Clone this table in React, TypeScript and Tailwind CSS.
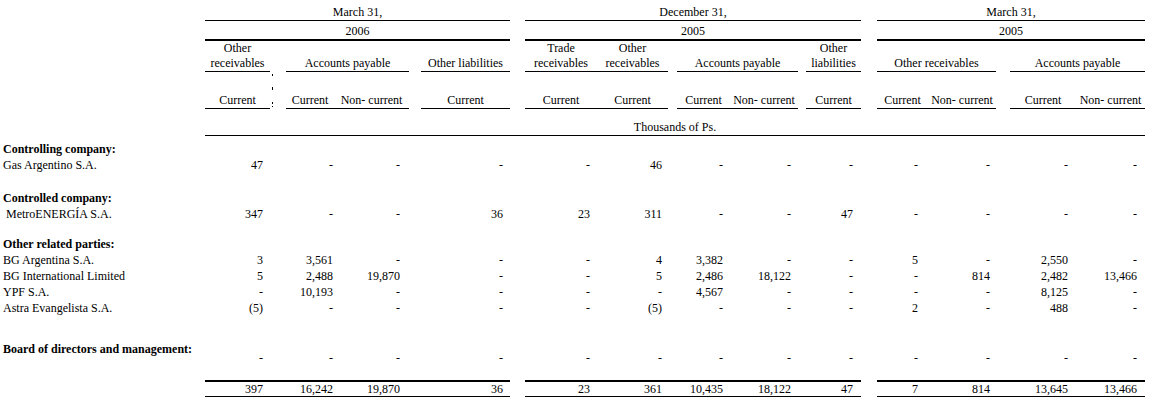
import React from "react";

// shared column tracks: label | 2006 block | gap | Dec 2005 block | gap | Mar 2005 block
const GRID =
  "grid grid-cols-[205px_65px_16px_48px_75px_12px_89px_15px_72px_71px_9px_53px_68px_8px_55px_16px_51px_68px_14px_66px_69px_16px]";

const COL_START = [
  "col-start-2",
  "col-start-4",
  "col-start-5",
  "col-start-7",
  "col-start-9",
  "col-start-10",
  "col-start-12",
  "col-start-13",
  "col-start-15",
  "col-start-17",
  "col-start-18",
  "col-start-20",
  "col-start-21",
];

// right padding so figures line up with the printed columns
const PAD = [
  "pr-[7px]",
  "pr-[1px]",
  "pr-[9px]",
  "pr-[7px]",
  "pr-[7px]",
  "pr-[6px]",
  "pr-[7px]",
  "pr-[7px]",
  "pr-[8px]",
  "pr-[10px]",
  "pr-[6px]",
  "pr-[8px]",
  "pr-[8px]",
];

const SUB_HEADS = [
  "Current",
  "Current",
  "Non- current",
  "Current",
  "Current",
  "Current",
  "Current",
  "Non- current",
  "Current",
  "Current",
  "Non- current",
  "Current",
  "Non- current",
];

const GROUPS = [
  { span: "col-start-2 col-end-8", month: "March 31,", year: "2006" },
  { span: "col-start-9 col-end-16", month: "December 31,", year: "2005" },
  { span: "col-start-17 col-end-22", month: "March 31,", year: "2005" },
];

const HEADS = [
  { span: "col-start-2 col-end-3", lines: ["Other", "receivables"] },
  { span: "col-start-4 col-end-6", lines: ["Accounts payable"] },
  { span: "col-start-7 col-end-8", lines: ["Other liabilities"] },
  { span: "col-start-9 col-end-10", lines: ["Trade", "receivables"] },
  { span: "col-start-10 col-end-11", lines: ["Other", "receivables"] },
  { span: "col-start-12 col-end-14", lines: ["Accounts payable"] },
  { span: "col-start-15 col-end-16", lines: ["Other", "liabilities"] },
  { span: "col-start-17 col-end-19", lines: ["Other receivables"] },
  { span: "col-start-20 col-end-22", lines: ["Accounts payable"] },
];

const D = "-";

const ALL_DASH = Array(13).fill(D);

interface RowProps {
  label?: string;
  values?: string[];
  bold?: boolean;
  height: string;
}

function Row({ label, values, bold, height }: RowProps) {
  return (
    <div className={`${GRID} ${height} items-end`}>
      {label && (
        <div className={`col-start-1 pl-[3px] whitespace-pre ${bold ? "font-bold" : ""}`}>
          {label}
        </div>
      )}
      {values?.map((v, i) => (
        <div key={i} className={`${COL_START[i]} ${PAD[i]} text-right`}>
          {v}
        </div>
      ))}
    </div>
  );
}

export default function App() {
  const totals = ["397", "16,242", "19,870", "36", "23", "361", "10,435", "18,122", "47", "7", "814", "13,645", "13,466"];

  return (
    <div className="w-[1161px] h-[413px] overflow-hidden bg-white text-black text-[12px] leading-[16px] font-['Liberation_Serif','Times_New_Roman',serif]">
      {/* period headings */}
      <div className={`${GRID} h-[21px]`}>
        {GROUPS.map((g) => (
          <div key={g.month + g.year} className={`${g.span} border-b border-black text-center pt-[4px]`}>
            {g.month}
          </div>
        ))}
      </div>
      <div className={`${GRID} h-[20px]`}>
        {GROUPS.map((g) => (
          <div key={g.month + g.year} className={`${g.span} border-b-2 border-black text-center pt-[2px]`}>
            {g.year}
          </div>
        ))}
      </div>

      {/* account headings */}
      <div className={`${GRID} h-[31px]`}>
        {HEADS.map((h) => (
          <div
            key={h.span}
            className={`${h.span} border-b border-black flex flex-col justify-end items-center leading-[15px]`}
          >
            {h.lines.map((l) => (
              <span key={l}>{l}</span>
            ))}
          </div>
        ))}
      </div>

      <div className={`${GRID} h-[37px]`}>
        {SUB_HEADS.map((s, i) => (
          <div key={i} className={`${COL_START[i]} row-start-1 border-b border-black flex items-end justify-center`}>
            {s}
          </div>
        ))}
        <div className="col-start-3 row-start-1 flex flex-col items-start pl-[2px]">
          <div className="mt-[2px] h-[2px] w-[1px] bg-black" />
          <div className="mt-[11px] h-[3px] w-[1px] bg-black" />
          <div className="mt-[12px] h-[2px] w-[1px] bg-black" />
          <div className="mt-[2px] h-[1px] w-[1px] bg-black" />
        </div>
      </div>

      <div className={`${GRID} h-[27px]`}>
        <div className="col-start-2 col-end-22 border-b border-black flex items-end justify-center">
          Thousands of Ps.
        </div>
      </div>

      {/* body */}
      <Row label="Controlling company:" bold height="h-[21px]" />
      <Row label="Gas Argentino S.A." values={["47", D, D, D, D, "46", D, D, D, D, D, D, D]} height="h-[16px]" />
      <Row label="Controlled company:" bold height="h-[33px]" />
      <Row label=" MetroENERGÍA S.A." values={["347", D, D, "36", "23", "311", D, D, "47", D, D, D, D]} height="h-[16px]" />
      <Row label="Other related parties:" bold height="h-[30px]" />
      <Row label="BG Argentina S.A." values={["3", "3,561", D, D, D, "4", "3,382", D, D, "5", D, "2,550", D]} height="h-[16px]" />
      <Row
        label="BG International Limited"
        values={["5", "2,488", "19,870", D, D, "5", "2,486", "18,122", D, D, "814", "2,482", "13,466"]}
        height="h-[16px]"
      />
      <Row label="YPF S.A." values={[D, "10,193", D, D, D, D, "4,567", D, D, D, D, "8,125", D]} height="h-[16px]" />
      <Row label="Astra Evangelista S.A." values={["(5)", D, D, D, D, "(5)", D, D, D, "2", D, "488", D]} height="h-[16px]" />

      <div className={`${GRID} h-[50px] items-end`}>
        <div className="col-start-1 row-start-1 pl-[3px] font-bold mb-[9px]">Board of directors and management:</div>
        {ALL_DASH.map((v, i) => (
          <div key={i} className={`${COL_START[i]} ${PAD[i]} row-start-1 text-right`}>
            {v}
          </div>
        ))}
      </div>

      {/* totals */}
      <div className={`${GRID} mt-[14px] h-[17px]`}>
        {GROUPS.map((g) => (
          <div key={g.month + g.year} className={`${g.span} row-start-1 border-t-2 border-b border-black`} />
        ))}
        {totals.map((v, i) => (
          <div key={i} className={`${COL_START[i]} ${PAD[i]} row-start-1 text-right pt-[2px] leading-[14px]`}>
            {v}
          </div>
        ))}
      </div>
    </div>
  );
}
